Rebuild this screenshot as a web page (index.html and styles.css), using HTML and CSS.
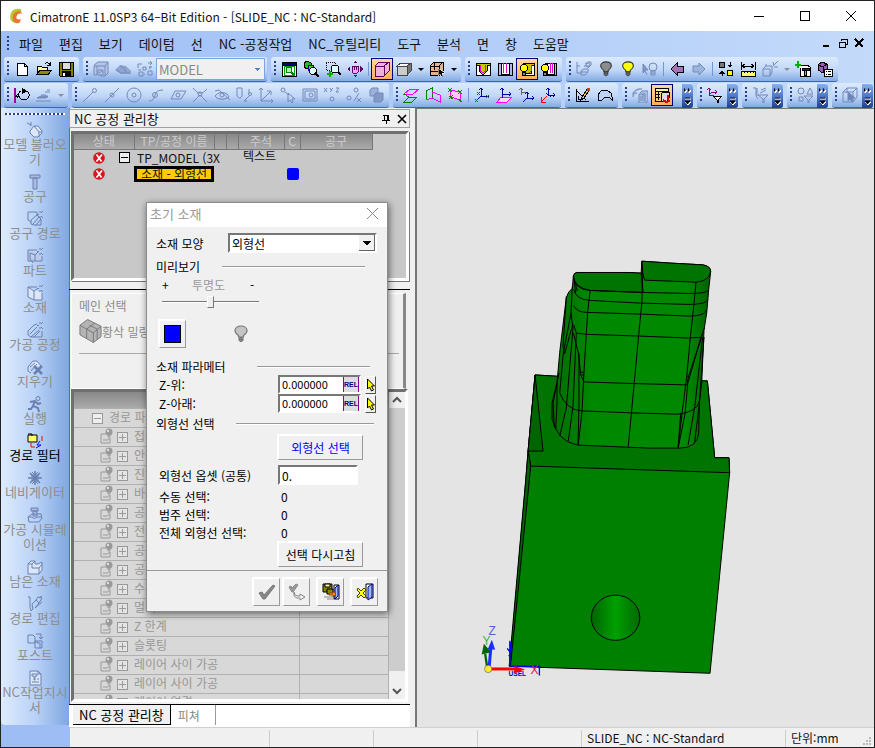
FILE: index.html
```html
<!DOCTYPE html>
<html lang="ko">
<head>
<meta charset="utf-8">
<title>CimatronE 11.0SP3 64–Bit Edition</title>
<link rel="stylesheet" href="styles.css">
</head>
<body>
<!-- shared icons -->
<svg class="defs" aria-hidden="true">
  <symbol id="pin" viewBox="0 0 14 16"><path d="M1 6h5M1 6v9h9V10M3 12h5" stroke="#999" fill="none"/><circle cx="9" cy="4" r="3.500" fill="#999"/><circle cx="8" cy="3" r="1.200" fill="#ddd"/><path d="M9 7v5M7 8h4" stroke="#999"/></symbol>
  <symbol id="plus" viewBox="0 0 11 11"><path d="M.5.5h10v10H.5zM2 5.500h7M5.500 2v7" fill="#e4e4e4" stroke="#999"/></symbol>
  <symbol id="minus" viewBox="0 0 11 11"><path d="M.5.5h10v10H.5zM2 5.500h7" fill="#eee" stroke="currentColor"/></symbol>
  <symbol id="err" viewBox="0 0 12 12"><circle cx="6" cy="6" r="5.800" fill="#d8141c"/><path d="M3.500 2.500l5 7M9 2.500l-5.500 7" stroke="#fff" stroke-width="1.700"/></symbol>
  <symbol id="more" viewBox="0 0 11 24"><path d="M2 4l2 2-2 2zM6 4l2 2-2 2z" fill="#fff" stroke="#fff" transform="translate(1 1)"/><path d="M2 4l2 2-2 2zM6 4l2 2-2 2z" fill="#000" stroke="none"/><path d="M3 15h6M3 18h6l-3 3z" fill="#fff" stroke="#fff"/><path d="M3 14h5M3 17h5l-2.500 3z" fill="#000" stroke="#000" stroke-width=".8"/></symbol>
  <symbol id="bulb" viewBox="0 0 14 18"><path d="M4.500 12v-1.500Q1 8 1 5.500C1 2.500 4 1 7 1s6 1.500 6 4.500Q13 8 9.500 10.500V12z" stroke-width="1.200"/><path d="M5 12.500h4v3l-1 1H6l-1-1zM5 14.500h4" fill="#888" stroke-width="1"/></symbol>
  <symbol id="burst" viewBox="0 0 6 7"><path d="M0 3.500h2M3 0v2M3 5v2M4 2l2-2M4 5l2 2" fill="none"/></symbol>
</svg>

<div class="app">
  <!-- title bar -->
  <header class="titlebar">
    <svg class="logo" viewBox="0 0 16 18"><path d="M13 1Q3-1 1.500 7T7 16Q4 12 5 8T13 4z" fill="#b5c934"/><path d="M12 3Q4 3 4 10q0 7 7 6l2-4Q7 13 8 9t6-3z" fill="#e8762e"/></svg>
    <h1>CimatronE 11.0SP3 64–Bit Edition - [SLIDE_NC : NC-Standard]</h1>
    <div class="winbtns">
      <button aria-label="최소화"><svg viewBox="0 0 10 10"><path d="M0 5.500h10"/></svg></button>
      <button aria-label="최대화"><svg viewBox="0 0 10 10"><path d="M.5.500h9v9h-9z"/></svg></button>
      <button aria-label="닫기"><svg viewBox="0 0 10 10"><path d="M0 0l10 10M10 0L0 10" shape-rendering="auto"/></svg></button>
    </div>
  </header>

  <!-- menu -->
  <nav class="menubar">
    <i class="grip"></i>
    <a href="#">파일</a><a href="#">편집</a><a href="#">보기</a><a href="#">데이텀</a><a href="#">선</a><a href="#">NC -공정작업</a><a href="#">NC_유틸리티</a><a href="#">도구</a><a href="#">분석</a><a href="#">면</a><a href="#">창</a><a href="#">도움말</a>
    <div class="mdi">
      <button aria-label="창 최소화"><svg viewBox="0 0 10 10"><path d="M1 8h6" stroke-width="2"/></svg></button>
      <button aria-label="창 복원"><svg viewBox="0 0 10 10"><path d="M3 3V1h6v5H7M3 1.500h6M1 4h6v5H1zM1 4.500h6"/></svg></button>
      <button aria-label="창 닫기"><svg viewBox="0 0 10 10"><path d="M1 1l8 8M9 1L1 9" stroke-width="2"/></svg></button>
    </div>
  </nav>

  <!-- toolbars -->
  <div class="toolbars">
    <div class="row">
      <div class="group"><i class="grip"></i>
        <button aria-label="새 문서"><svg viewBox="0 0 16 16"><path d="M3 2h7l3 3v9H3zM10 2v3h3" fill="#fff"/></svg></button>
        <button aria-label="열기"><svg viewBox="0 0 16 16"><path d="M1 13V5h4l1 1h5v3" fill="#ffff9c"/><path d="M1 13.500L4 9h12l-4 4.500z" fill="#8c8c00"/><path d="M9 3q3-3 5 1M14 1v3h-3"/></svg></button>
        <button aria-label="저장"><svg viewBox="0 0 16 16"><path d="M1 1h14v14H2l-1-1z" fill="#808000"/><path d="M4 1h8v7H4z" fill="#dcdcdc"/><path d="M4 10h8v5H4z" fill="#000"/><path d="M5 12h2v3H5z" fill="#fff" stroke="none"/></svg></button>
      </div>
      <div class="group"><i class="grip"></i>
        <button disabled aria-label="모델"><svg viewBox="0 0 16 16"><path d="M1 4l4-3h10v11l-3 3M1 5h3v9H1zM4 5h8M12 5v10H7M12 5l3-4M5 9h5v5H5zM6 12l3-2" fill="#b3c6e8"/></svg></button>
        <button disabled aria-label="솔리드"><svg viewBox="0 0 16 16"><path d="M0 9l5-5 6 1 5 5v3H6z" fill="#8ea5d0" stroke="none"/><path d="M1 9l5 3h9M5 5q5 1 6 6"/></svg></button>
        <button disabled aria-label="교체"><svg viewBox="0 0 16 16"><path d="M1 3h4M1 3v4M6 6h3v3H6zM2 11h4v4H2zM11 10h4v4h-4zM11 2h4M13 0l2 2-2 2M1 9h3M8 13H7M12 6h3M13 5v3"/></svg></button>
        <select disabled aria-label="좌표계"><option>MODEL</option></select>
      </div>
      <div class="group"><i class="grip"></i>
        <button aria-label="전체 보기"><svg viewBox="0 0 16 16"><path d="M1 1h14v14H1z" fill="#fff"/><path d="M1 1h14v3H1z" fill="#000080"/><path d="M3 5h10v9H3z" stroke="#00a000" fill="none"/><circle cx="8" cy="9" r="3" stroke="#008000" fill="#b4f0b4"/><path d="M10 11l3 3" stroke="#008000" stroke-width="2"/></svg></button>
        <button aria-label="선택 확대"><svg viewBox="0 0 16 16"><path d="M1 2l3-2 4 2v4L4 8 1 6z" fill="#20c020"/><path d="M5 4h5v5H5z" fill="#30e030" stroke="#0000a0"/><circle cx="10" cy="10" r="3.500" fill="#dff"/><path d="M12 12l4 4" stroke-width="2"/></svg></button>
        <button aria-label="창 확대"><svg viewBox="0 0 16 16"><path d="M1 1h9v8H1z" stroke-dasharray="1 1"/><circle cx="10" cy="8" r="4" fill="#dff"/><path d="M13 11l3 3" stroke-width="2"/><path d="M5 10v6M2 13h6" stroke="#00b000" stroke-width="2"/></svg></button>
        <button aria-label="화면 이동"><svg viewBox="0 0 16 16"><path d="M5 5h6v6q-3 4-6 0z" fill="#ff9cff" stroke="#600060"/><path d="M0 8l3-3v6zM16 8l-3-3v6zM8 0l2 2H6zM8 16l2-2H6z" fill="#600060"  stroke="none"/><path d="M7 5v4M9 5v4" stroke="#600060"/></svg></button>
        <i class="sep"></i>
        <button class="on" aria-label="와이어"><svg viewBox="0 0 16 16"><path d="M1 5l4-4h10v9l-5 5H1zM1 5h9v10M10 5l5-4" fill="#efb0df" stroke="#600060"/></svg></button>
        <button aria-label="음영"><svg viewBox="0 0 16 16" class="soft"><path d="M1 5l4-3h10v8l-4 4H1z" fill="#777"/><path d="M1 5h10v9H1z" fill="#ccc"/><path d="M1 5l4-3h10l-4 3z" fill="#fff"/></svg></button><button class="drop" aria-label="음영 옵션"></button>
        <button aria-label="회전"><svg viewBox="0 0 16 16"><path d="M1 5l4-4h9v9M1 5h9v9H1zM1 10h9M5 1v8M10 5l4-4" fill="#e4b48c"/><path d="M9 7v8l2-2 2 3 1-1-1-3h3z" fill="#000" stroke="#fff" stroke-width=".5"/></svg></button><button class="drop" aria-label="회전 옵션"></button>
      </div>
      <div class="group"><i class="grip"></i>
        <button aria-label="커터 1"><svg viewBox="0 0 16 16"><path d="M1 2h14v12H1z" fill="#fff"/><path d="M1 2h14v2h-3v6l-3 3H7l-3-3V4H1z" fill="#c8c400"/><path d="M5.500 4v6l2.500 2 2.500-2V4" stroke="#f000d0"/></svg></button>
        <button aria-label="커터 2"><svg viewBox="0 0 16 16"><path d="M1 2h14v12H1z" fill="#b4b4ee"/><path d="M4 2h8v11H4z" fill="#fff"/><path d="M6.500 2v10M9.500 2v10" stroke="#f000d0"/></svg></button>
        <button class="on" aria-label="커터 3"><svg viewBox="0 0 16 16"><path d="M4 2h11v12H4z" fill="#fff"/><path d="M4 2h11v2h-3v8H6z" fill="#c8c400"/><path d="M12 4v6l-2 2" stroke="#f000d0"/><circle cx="5" cy="7" r="3.500" fill="#ff0"/><path d="M3.500 11.500h3v3h-3z" fill="#888"/></svg></button>
        <button aria-label="커터 4"><svg viewBox="0 0 16 16"><path d="M4 2h11v12H4z" fill="#b4b4ee"/><path d="M6 2h7v11H6z" fill="#fff"/><path d="M9.500 2v10M11.500 2v10" stroke="#f000d0"/><circle cx="4" cy="7" r="3.500" fill="#ff0"/><path d="M2.500 11.500h3v3h-3z" fill="#888"/></svg></button>
      </div>
      <div class="group"><i class="grip"></i>
        <button disabled aria-label="트리"><svg viewBox="0 0 16 16"><path d="M1 1v11h4M1 5h3M8 5h5M5 11h6M9 3l3-2h3v3l-3 3M5 10l3-2h4v3l-3 3H5z" fill="none"/><circle cx="12" cy="4" r="2"/></svg></button>
        <button aria-label="숨기기"><svg viewBox="0 0 14 18" class="dark"><use href="#bulb"/></svg></button>
        <button aria-label="보이기"><svg viewBox="0 0 14 18" class="lit"><use href="#bulb"/></svg></button>
        <button disabled aria-label="선택 보이기"><svg viewBox="0 0 16 16"><path d="M1 3v9l2-2 2 4M1 3l5 6H3" fill="#7d93c0"/><circle cx="11" cy="6" r="4"/><path d="M9 10h4v4H9zM9 12h4"/></svg></button>
        <i class="sep"></i>
        <button aria-label="이전"><svg viewBox="0 0 16 16"><path d="M2 8l6-6v3h6v6H8v3z" fill="#a674b4"/></svg></button>
        <button disabled aria-label="다음"><svg viewBox="0 0 16 16"><path d="M14 8L8 2v3H2v6h6v3z" fill="#9fb6dc"/></svg></button>
        <i class="sep"></i>
        <button aria-label="전환"><svg viewBox="0 0 16 16"><circle cx="4" cy="4" r="3" fill="#777"/><circle cx="12" cy="12" r="3" fill="#ff0"/><path d="M12 1v3M10 4h4l-2 2zM4 15v-3M2 12h4l-2-2z" fill="#000"/></svg></button>
        <button aria-label="측정"><svg viewBox="0 0 16 16"><path d="M1 1v8M15 1v8M2 5h12M5 3L2 5l3 2M11 3l3 2-3 2"/><path d="M1 10h14v5H1z" fill="#ff6"/><path d="M4 10v2M7 10v2M10 10v2M13 10v2"/></svg></button>
        <button disabled aria-label="단면"><svg viewBox="0 0 16 16"><path d="M1 8l3-3h6v6l-2 4H1zM1 8h7v7M4 5V3M11 5l5-5M11 1l1 3M12 6h4"/></svg></button><button class="drop" disabled aria-label="단면 옵션"></button>
        <button aria-label="공구 추가"><svg viewBox="0 0 16 16"><path d="M6 4h6l3 2v9H5V7" fill="#fff"/><path d="M7 7h7v2H7z" fill="#333"/><path d="M9.500 9h2v5h-2z" fill="#e90"/><path d="M3 0v7M0 3.500h6" stroke="#00b000" stroke-width="2"/></svg></button>
        <button aria-label="속성"><svg viewBox="0 0 16 16"><path d="M1 4l4-3 5 2v6l-4 3-5-3z" fill="#a05ab4"/><path d="M1 4l5 2v5M6 6l4-3"/><path d="M7 8h8v7H7z" fill="#fff"/><path d="M9 10h1M11 10h3M9 13h1M11 13h3"/></svg></button>
      </div>
    </div>

    <div class="row">
      <div class="group"><i class="grip"></i>
        <button aria-label="스케치"><svg viewBox="0 0 16 16"><path d="M1 1v15" stroke="#a000a0" stroke-width="2"/><path d="M7 4Q3 6 5 10q3 4 8 2 4-3 1-7l-3-1M1 9h5M4 7L2 9l2 2"/><path d="M8 1v6l4-3z" fill="#000"/></svg></button>
        <button disabled aria-label="플랜"><svg viewBox="0 0 16 16"><path d="M0 14h15M5 8h5M4 10h8M9 5h5M11 3h3"/><path d="M1 11h9l2-2H5z" fill="#7d93c0"/></svg></button><button class="drop" disabled aria-label="플랜 옵션"></button>
      </div>
      <div class="group"><i class="grip"></i>
        <button disabled aria-label="끝점"><svg viewBox="0 0 16 16"><path d="M1 15L11 5"/><circle cx="12.500" cy="3.500" r="2"/></svg></button>
        <button disabled aria-label="중간점"><svg viewBox="0 0 16 16"><path d="M1 15L15 1"/><circle cx="8" cy="8" r="2"/></svg></button>
        <button disabled aria-label="중심"><svg viewBox="0 0 16 16"><circle cx="8" cy="8" r="7"/><circle cx="8" cy="8" r="2"/></svg></button>
        <button disabled aria-label="곡선점"><svg viewBox="0 0 16 16"><path d="M1 14q5 0 6-6 1-5 8-5"/><circle cx="7" cy="8" r="2.500"/></svg></button>
        <button disabled aria-label="면점"><svg viewBox="0 0 16 16"><path d="M1 12l4-8h11l-5 8z"/><circle cx="8" cy="8" r="2"/></svg></button>
        <button disabled aria-label="교차점"><svg viewBox="0 0 16 16"><path d="M1 1q7 10 14 1M1 15L8 8l7 7"/><circle cx="8" cy="7" r="2"/></svg></button>
        <button disabled aria-label="관통점"><svg viewBox="0 0 16 16"><path d="M1 4l4-1 11 10M1 9q5-6 12-2l2 3q-6 4-12 1z"/><circle cx="8" cy="8" r="2"/></svg></button>
        <button disabled aria-label="투영점"><svg viewBox="0 0 16 16"><path d="M1 1h5v8q-2 4-5 0zM8 14l6-6M8 14h3M13 2v4"/><circle cx="14" cy="7" r="1.500"/></svg></button>
        <button disabled aria-label="축점"><svg viewBox="0 0 16 16"><path d="M3 1v13h12M3 14l9-9M1 3l2-2 2 2M13 12l2 2-2 2M9 4h4v4"/></svg></button>
        <button disabled aria-label="선택점"><svg viewBox="0 0 16 16"><circle cx="3" cy="3" r="2"/><path d="M5 5l4 3M8 6v9l2-2 2 3 1-1-1-3h3z"/></svg></button>
        <button disabled aria-label="화면점"><svg viewBox="0 0 16 16"><path d="M1 2h14v12H1zM3 4h10v8H3z"/><circle cx="9" cy="8" r="2"/></svg></button>
        <button disabled aria-label="좌표점"><svg viewBox="0 0 16 16"><path d="M0 1l3 4M3 1L0 5M6 1l1 2 2-2M8 3L6 5M12 1h3l-3 4h3"/><circle cx="8" cy="12" r="2"/></svg></button>
        <button disabled aria-label="비율점"><svg viewBox="0 0 16 16"><path d="M8 14l5-8M11 11l4 4M15 11l-4 4"/><circle cx="10" cy="3" r="2"/><circle cx="3" cy="11" r="2"/></svg></button>
        <button disabled aria-label="솔리드 점"><svg viewBox="0 0 16 16"><path d="M2 3l2-2h6v6l-2 2H2z" fill="#9db1da"/><path d="M6 8l2-2h7v7l-2 2H6z" fill="#8298c6"/></svg></button>
      </div>
      <div class="group"><i class="grip"></i>
        <button aria-label="평면"><svg viewBox="0 0 16 16"><path d="M1 7l6-5h9l-6 5z" stroke="#f0f"/><path d="M1 15l5-5h8l-5 5zM1 7l5 3" stroke="#008000"/></svg></button>
        <button aria-label="평면 2"><svg viewBox="0 0 16 16"><path d="M1 13V4l6-3v10z" stroke="#008000"/><path d="M7 5l8 3v7L7 11 1 13" stroke="#f0f"/></svg></button>
        <button aria-label="평면 3"><svg viewBox="0 0 16 16"><path d="M3 3l10 2v8L4 10z" stroke="#f0f" fill="#fce"/><path d="M1 1l4 4M5 1L1 5M11 3l4 4M15 3l-4 4M11 12l4 3M2 9l4 3M6 8l-4 4" stroke="#008000"/></svg></button>
        <i class="sep"></i>
        <button aria-label="좌표 1"><svg viewBox="0 0 16 16"><path d="M7 9V1M5 3l2-2 2 2M7 9h8M7 9l-5 5" stroke="#0000a0"/><path d="M3 5l3 3M6 5L3 8M12 8l3 3M15 8l-3 3M1 12l3 3M4 12l-3 3" stroke="#008000"/></svg></button>
        <button aria-label="좌표 2"><svg viewBox="0 0 16 16"><path d="M1 15l4-5h11l-5 5z" stroke="#f0f" fill="#fbd6ff"/><path d="M6 11V1M4 3l2-2 2 2M6 7h9M13 5l2 2-2 2" stroke="#0000a0"/></svg></button>
        <button aria-label="좌표 3"><svg viewBox="0 0 16 16"><path d="M3 8V1M1 3l2-2 2 2M3 5h5" stroke="#666"/><path d="M9 12V5M7 7l2-2 2 2M9 11h7M14 9l2 2-2 2M9 11l-4 4" stroke="#0000a0"/></svg></button>
        <button aria-label="좌표 4"><svg viewBox="0 0 16 16"><path d="M8 8V1M6 3l2-2 2 2M8 8h7M13 6l2 2-2 2M6 6l5 4" stroke="#0000a0"/><path d="M7 9l-5 5M1 10v5h5" stroke="red"/></svg></button>
      </div>
      <div class="group"><i class="grip"></i>
        <button aria-label="스케쳐"><svg viewBox="0 0 16 16"><path d="M1 2v12h13M1 3l10 10M3 9v3h3"/><path d="M7 10l6-9 2 1-6 9-3 2z" fill="#f7c74a"/><path d="M13 1l2 1-1 2-2-1z" fill="#c40" stroke="#c40"/></svg></button>
        <button aria-label="복합선"><svg viewBox="0 0 16 16"><path d="M1 14V8l3-4q6-2 10 2l2 8-3-3q-3-2-6 0l-2 2z" fill="#bcd3f8"/></svg></button>
      </div>
      <div class="group"><i class="grip"></i>
        <button disabled aria-label="공정"><svg viewBox="0 0 16 16"><path d="M1 6q3-5 9-4M1 10V6h4M8 6l2-2h6v10l-2 2H7V7h6v8M9 9v5M11 7v7" fill="#a9bfe6"/></svg></button>
        <button class="on" aria-label="공정 관리창"><svg viewBox="0 0 16 16"><path d="M1 1h13v13H1z" fill="#ffd27a"/><path d="M1 1h13v3H1zM1 7h5M1 10h5M4 4v9" fill="#ffef9a"/><path d="M7 7l2-2h6v6l-2 3H7z" fill="#ddd"/><path d="M9 13l3 2 4-1M14 8v5" stroke="#d00" stroke-width="2"/></svg></button>
        <i class="gap"></i><button class="more" aria-label="더 보기"><svg viewBox="0 0 11 24"><use href="#more"/></svg></button>
      </div>
      <div class="group"><i class="grip"></i>
        <button aria-label="필터 1"><svg viewBox="0 0 16 16"><path d="M0 3l2-2 2 2M2 1v7h5M5 5h5M8 3l2 2-2 2M2 8l3-3" stroke="#900078"/><path d="M6 9h9l-4 4v3h-1v-3z" fill="#fff"/></svg></button>
        <button class="more" aria-label="더 보기"><svg viewBox="0 0 11 24"><use href="#more"/></svg></button>
      </div>
      <div class="group"><i class="grip"></i>
        <button disabled aria-label="필터 2"><svg viewBox="0 0 16 16"><path d="M1 1h3v8l2 3M5 1v8M8 6l6-3M9 3l5-2M6 8h10l-4 4v4h-1v-4z"/></svg></button>
        <button class="more" aria-label="더 보기"><svg viewBox="0 0 11 24"><use href="#more"/></svg></button>
      </div>
      <div class="group"><i class="grip"></i>
        <button disabled aria-label="필터 3"><svg viewBox="0 0 16 16"><circle cx="4" cy="4" r="3"/><path d="M10 7l3-6 3 6zM2 10h4v4H2zM7 9h9l-4 4v3h-1v-3z"/></svg></button>
        <button class="more" aria-label="더 보기"><svg viewBox="0 0 11 24"><use href="#more"/></svg></button>
      </div>
      <div class="group"><i class="grip"></i>
        <button disabled aria-label="선택"><svg viewBox="0 0 16 16"><path d="M1 5l4-4h10v9l-4 5H1zM1 5h10v9M11 5l4-4M5 1v5"/><path d="M6 5v9l2-2 2 3 1-1-1-3h3z" fill="#6c84b5"/></svg></button>
        <button class="more" aria-label="더 보기"><svg viewBox="0 0 11 24"><use href="#more"/></svg></button>
      </div>
    </div>
  </div>

  <div class="body">
    <!-- NC guide bar -->
    <aside class="guide">
      <div class="guide-in">
        <i class="dots"></i>
        <button disabled><svg viewBox="0 0 16 16"><path d="M3 9l4-5h4l4 5v2l-4 4H7l-4-4zM7 4l5 6v5M0 1l4 2M4 0v4M12 10h3" fill="#dbe6f8"/></svg>모델 불러오기</button>
        <button disabled><svg viewBox="0 0 16 16"><path d="M3 1h10v3H3zM6 4h4v11H6z" fill="#a9bbdf"/></svg>공구</button>
        <button disabled><svg viewBox="0 0 16 16"><path d="M1 1h9v3M1 1v8l3 2M4 13v-4l6-5 4 4v6H7zM6 13l6-7M9 14l5-6"/><use href="#burst" x="10" width="6" height="7"/></svg>공구 경로</button>
        <button disabled><svg viewBox="0 0 16 16"><path d="M1 2h9M1 2v11h14V8M3 5l5 2v6M8 7l3-3M3 5v6l3 4" fill="#bccbe8"/><use href="#burst" x="10" width="6" height="7"/></svg>파트</button>
        <button disabled><svg viewBox="0 0 16 16"><path d="M1 2h9M1 2l6 4M1 2v10l6 3h8V8M7 6v9M7 6l3-2" fill="#dbe6f8"/><use href="#burst" x="10" width="6" height="7"/></svg>소재</button>
        <button disabled><svg viewBox="0 0 16 16"><path d="M1 9l6-6 3-1M1 9v4l3 2 8-7M4 15h11V9M3 12l7-7M7 15l6-6"/><use href="#burst" x="10" width="6" height="7"/></svg>가공 공정</button>
        <button disabled><svg viewBox="0 0 16 16"><path d="M1 8l5-6h4l4 5M1 8v4l3 2M4 12l6-7M3 8l5-4" fill="#dbe6f8"/><path d="M7 7l8 8M15 7l-8 8" stroke-width="2.500"/></svg>지우기</button>
        <button disabled><svg viewBox="0 0 16 16"><circle cx="11" cy="2.500" r="2"/><path d="M3 6l5-1 3 3 3-1M8 5L6 10l5 2 1 4M6 10l-2 3H1" stroke-width="2"/></svg>실행</button>
        <button class="live"><svg viewBox="0 0 16 16"><path d="M1 2h9v7H1z" fill="#ff6" stroke="#000"/><path d="M1 1h4v2" stroke="#000"/><path d="M15 3v5M4 10v4h4" stroke="red"/><path d="M13 8l-3 4h4l-5 3" stroke="#00f"/></svg>경로 필터</button>
        <button disabled><svg viewBox="0 0 16 16"><path d="M8 1v14M1 8h14M3 3l10 10M13 3L3 13" stroke-width="1.500"/><path d="M5 5h6v6H5zM5 2l3 3 3-3M5 14l3-3 3 3"/></svg>네비게이터</button>
        <button disabled><svg viewBox="0 0 16 16"><path d="M4 1h7v3H4zM6 4h4v5H6z" fill="#a9bbdf"/><path d="M1 10l4-3h9l1 4-3 4H2zM1 10h4q2 3 5 0h4"/></svg>가공 시뮬레이션</button>
        <button disabled><svg viewBox="0 0 16 16"><path d="M1 5l3-3h4v3h3l4-2v8l-3 4H1zM1 5h4v4h7v6M12 9l3-4M5 5l3-3" fill="#dbe6f8"/></svg>남은 소재</button>
        <button disabled><svg viewBox="0 0 16 16"><path d="M1 1h2v10l1 4 2-2-1-5 4-4 3 3-4 5 7-6M9 4l2-3 4 1-3 5M13 1l2-1"/></svg>경로 편집</button>
        <button disabled><svg viewBox="0 0 16 16"><path d="M1 2h5l2 2v6H1zM9 1h5v5M12 4l2 2 2-2M8 8h7v7H8zM10 10h3v5M10 8v2"/></svg>포스트</button>
        <button disabled><svg viewBox="0 0 16 16"><path d="M3 1h8l3 3v11H3zM11 1v3h3M5 4h5v2H8v4H7V6H5zM5 12h7M10 9h2" fill="#dbe6f8"/></svg>NC작업지시서</button>
      </div>
    </aside>

    <div class="work">
      <div class="split">
        <section class="panel">
          <div class="caption">
            <h2>NC 공정 관리창</h2>
            <button aria-label="고정"><svg viewBox="0 0 10 10"><path d="M2 1h6M3 1v5M7 1v5M6 1v5M1 6h8M5 6v4"/></svg></button>
            <button aria-label="패널 닫기"><svg viewBox="0 0 10 10"><path d="M1 1l8 8M9 1L1 9" stroke-width="1.600" shape-rendering="auto"/></svg></button>
          </div>

          <div class="bevel procs">
            <table>
              <thead><tr><th class="w-state">상태</th><th class="w-name">TP/공정 이름</th><th class="w-flag"></th><th class="w-flag"></th><th class="w-note">주석</th><th class="w-c">C</th><th class="w-tool">공구</th></tr></thead>
              <tbody>
                <tr><td class="st"><svg><use href="#err"/></svg></td><td class="tp"><svg><use href="#minus"/></svg>TP_MODEL (3X</td><td></td><td></td><td class="note">텍스트</td><td></td><td></td></tr>
                <tr><td class="st"><svg><use href="#err"/></svg></td><td class="sel"><span>소재 - 외형선</span></td><td></td><td></td><td></td><td><i class="blue"></i></td><td></td></tr>
              </tbody>
            </table>
          </div>

          <div class="params">
            <div class="main">
              <p>메인 선택</p>
              <div class="pick"><svg viewBox="0 0 24 26"><path d="M1 7l8-6 14 7v11l-8 6-14-8z" fill="#b4b4b4" stroke="#777"/><path d="M1 7l14 8v10M15 15l8-7M8 11l8-6M8 11v10M11 7l8 4v11" fill="none" stroke="#777"/></svg>황삭 밀링</div>
            </div>
            <div class="list">
              <table>
                <thead><tr><th class="w-param"></th><th></th></tr></thead>
                <tbody>
                  <tr class="top"><td><svg class="box"><use href="#minus"/></svg>경로 파</td><td></td></tr>
                  <tr><td><svg class="pin"><use href="#pin"/></svg><svg class="box"><use href="#plus"/></svg>접근</td><td></td></tr>
                  <tr><td><svg class="pin"><use href="#pin"/></svg><svg class="box"><use href="#plus"/></svg>안전</td><td></td></tr>
                  <tr><td><svg class="pin"><use href="#pin"/></svg><svg class="box"><use href="#plus"/></svg>진입</td><td></td></tr>
                  <tr><td><svg class="pin"><use href="#pin"/></svg><svg class="box"><use href="#plus"/></svg>바운</td><td></td></tr>
                  <tr><td><svg class="pin"><use href="#pin"/></svg><svg class="box"><use href="#plus"/></svg>공차</td><td></td></tr>
                  <tr><td><svg class="pin"><use href="#pin"/></svg><svg class="box"><use href="#plus"/></svg>전극</td><td></td></tr>
                  <tr><td><svg class="pin"><use href="#pin"/></svg><svg class="box"><use href="#plus"/></svg>공구</td><td></td></tr>
                  <tr><td><svg class="pin"><use href="#pin"/></svg><svg class="box"><use href="#plus"/></svg>공구</td><td></td></tr>
                  <tr><td><svg class="pin"><use href="#pin"/></svg><svg class="box"><use href="#plus"/></svg>수직</td><td></td></tr>
                  <tr><td><svg class="pin"><use href="#pin"/></svg><svg class="box"><use href="#plus"/></svg>멀티</td><td></td></tr>
                  <tr><td><svg class="pin"><use href="#pin"/></svg><svg class="box"><use href="#plus"/></svg>Z 한계</td><td></td></tr>
                  <tr><td><svg class="pin"><use href="#pin"/></svg><svg class="box"><use href="#plus"/></svg>슬롯팅</td><td></td></tr>
                  <tr><td><svg class="pin"><use href="#pin"/></svg><svg class="box"><use href="#plus"/></svg>레이어 사이 가공</td><td></td></tr>
                  <tr><td><svg class="pin"><use href="#pin"/></svg><svg class="box"><use href="#plus"/></svg>레이어 사이 가공</td><td></td></tr>
                  <tr><td><svg class="pin"><use href="#pin"/></svg><svg class="box"><use href="#plus"/></svg>레이어 연결</td><td></td></tr>
                </tbody>
              </table>
              <div class="scroll">
                <svg viewBox="0 0 16 16"><path d="M4 10l4-4 4 4"/></svg>
                <i></i>
                <svg viewBox="0 0 16 16"><path d="M4 6l4 4 4-4"/></svg>
              </div>
            </div>
          </div>

          <div class="tabs"><button class="cur">NC 공정 관리창</button><button>피쳐</button></div>
        </section>

        <!-- initial stock dialog -->
        <form class="dialog">
          <header><h3>초기 소재</h3><button type="button" aria-label="닫기"><svg viewBox="0 0 11 11"><path d="M0 0l11 11M11 0L0 11"/></svg></button></header>
          <div class="line shape"><label for="shape">소재 모양</label><select id="shape"><option>외형선</option></select></div>
          <div class="line sect"><b>미리보기</b><hr class="h1"></div>
          <div class="line opac"><span>+</span><label for="opac">투명도</label><span>-</span></div>
          <div class="line slide"><input type="range" id="opac" value="50"></div>
          <div class="line color"><button type="button" class="swatch" aria-label="색상"><i></i></button><svg viewBox="0 0 14 18"><use href="#bulb"/></svg></div>
          <div class="line sect"><b>소재 파라메터</b><hr class="h2"></div>
          <div class="line z"><label for="zt">Z-위:</label><span class="num"><input id="zt" value="0.000000"><button type="button">REL</button></span><button type="button" class="pickbtn" aria-label="선택"><svg viewBox="0 0 10 16"><path d="M1.500 2v10l2-2 2 4 2-1-2-4h3z" fill="#ff0" stroke="#000"/></svg></button></div>
          <div class="line z"><label for="zb">Z-아래:</label><span class="num"><input id="zb" value="0.000000"><button type="button">REL</button></span><button type="button" class="pickbtn" aria-label="선택"><svg viewBox="0 0 10 16"><path d="M1.500 2v10l2-2 2 4 2-1-2-4h3z" fill="#ff0" stroke="#000"/></svg></button></div>
          <div class="line sect"><b>외형선 선택</b><hr class="h3"></div>
          <div class="line wide"><button type="button" class="btn pickc">외형선 선택</button></div>
          <div class="line off"><label for="off">외형선 옵셋 (공통)</label><input id="off" value="0."></div>
          <div class="line cnt"><span>수동 선택:</span><output>0</output></div>
          <div class="line cnt"><span>범주 선택:</span><output>0</output></div>
          <div class="line cnt"><span>전체 외형선 선택:</span><output>0</output></div>
          <div class="line wide"><button type="button" class="btn">선택 다시고침</button></div>
          <footer>
            <button type="button" disabled aria-label="확인"><svg viewBox="0 0 18 18"><path d="M1 10l3-1 2 3L15 2l2 1L7 16H5z" fill="#888" stroke="#777"/></svg></button>
            <button type="button" disabled aria-label="적용"><svg viewBox="0 0 18 18"><path d="M1 4l2-1 1 2 4-4 2 1-5 7H4z" fill="#999" stroke="#888"/><path d="M6 9q0 4 4 4h2v-2l5 3-5 3v-2H9q-4-1-3-6z" fill="#f0f0f0" stroke="#888"/></svg></button>
            <button type="button" class="gap" aria-label="저장 후 종료"><svg viewBox="0 0 18 18"><path d="M1 1h9v8H1z" fill="#880" stroke="#000"/><path d="M3 1h5v3H3z" fill="#ff8" stroke="#000"/><path d="M5 6h6v5H5z" fill="#880" stroke="#000"/><path d="M12 2h5v14h-5z" fill="#fff" stroke="#000"/><path d="M13 5l3-3v11l-3 3z" fill="#9bf" stroke="#00a"/><path d="M7 10h4V8l3 3-3 3v-2H7z" fill="#f80" stroke="#840"/><path d="M2 14h9M5 16h7" stroke="#888"/></svg></button>
            <button type="button" class="gap" aria-label="취소"><svg viewBox="0 0 18 18"><path d="M10 1h7v14h-7z" fill="#fff" stroke="#000"/><path d="M12 4l4-3v13l-4 3z" fill="#9bf" stroke="#00a"/><path d="M2 5l3 3 3-3 2 2-3 3 3 3-2 2-3-3-3 3-1-2 3-3-3-3z" fill="#ff0" stroke="#440"/></svg></button>
          </footer>
        </form>

        <!-- model view -->
        <main class="view">
          <svg viewBox="-159 -420 1374 1851" preserveAspectRatio="xMidYMid meet">
            <defs><linearGradient id="hole"><stop offset="0" stop-color="#006400"/><stop offset=".5" stop-color="#00a000"/><stop offset="1" stop-color="#006800"/></linearGradient>
            <linearGradient id="side" x2="1"><stop offset="0" stop-color="#006c00"/><stop offset=".25" stop-color="#008800"/><stop offset=".85" stop-color="#008800"/><stop offset="1" stop-color="#006000"/></linearGradient></defs>
            <g stroke="#000" stroke-width="3" stroke-linejoin="round">
              <path d="M196 376l66 4 435 14h17l22 231h43l2 45-59 603-602-21 48-557 7-90z" fill="#008000"/>
              <path d="M196 376l66 4 435 14h17l22 231h43l2 45-598-20-8-45z" fill="#007400"/>
              <path d="M196 376l24 229h-45z" fill="#006400"/>
              <path d="M175 605l8 45-61 602h-4l50-562z" fill="#006000"/>
              <path d="M311 80q2-12 12-12h153l39 2 2-36 90 6 93 5q24 4 24 20l-6 55-6 70-8 50-4 90-3 70-7 60-2 90q-4 45-55 46h-95l-118-5-95-4q-60-10-78-77v-50l15-60 8-92 20-165q6-20 18-27z" fill="url(#side)"/>
              <path d="M311 80q2-12 12-12h153l39 2 5 58-158-6q-46-8-51-42z" fill="#007400"/>
              <path d="M517 34l90 6 93 5q24 4 24 20-6 30-44 32l-155-6-5-20z" fill="#007400"/>
              <g fill="none">
                <path d="M517 34l3 94M362 122l-8 65-11 180-6 120-11 98M519 92l-2 66-10 104-13 140-18 190M680 97l-6 64-12 110-10 110-14 110-12 104"/>
                <path d="M312 88q8 32 50 34l158 6 138 3q56 0 60-10"/>
                <path d="M312 120q8 30 50 32l150 8 146 4q52 0 58-14"/>
                <path d="M312 168q10 20 40 20l156 5 150 6q48 0 54-18"/>
                <path d="M312 225l8 25 30 4 155 5 150 6 40-2 10-28"/>
                <path d="M311 250q20 60 22 125l10 22 150 5 160 4 4-25q20-60 42-125"/>
                <path d="M270 430q20 50 64 54l150 6 140 4q60-6 66-40"/>
                <path d="M308 110l-4 80-23 120-11 120M304 190l6 45-20 240-20 85M285 312l25-90M320 250l-10 220-14 105M328 310v160l-3 115M290 140l-10 150 5 22M268 370l-18 90 4 75M262 400v60l-4 80M334 368h10M333 376h10M650 380h8M695 262l-40 140-8 90-20 100M700 262l-24 210-20 115M704 262l-14 200-14 115M634 490l-8 104M312 80l6 50M318 104l5 20"/>
              </g>
              <ellipse cx="438" cy="1106" rx="73" ry="68" fill="url(#hole)"/>
            </g>
            <g class="axis">
              <path d="M120 1175v78M112 1198l8 10 8-10M124 1180v24M116 1220h8M125 1252h84v28" stroke="#00f" stroke-width="4" fill="none"/>
              <text class="ucs" x="116" y="1281" fill="#00d">USEL</text>
              <path d="M52 1255l-6-40M40 1212l4-20 14 16z" stroke="#060" stroke-width="7" fill="#060"/>
              <path d="M58 1255l5-60" stroke="#1a2cff" stroke-width="9"/><path d="M54 1200l12-28 10 30z" fill="#1a2cff"/>
              <path d="M60 1260h82" stroke="red" stroke-width="9"/><path d="M134 1251l32 11-32 11z" fill="red"/>
              <circle cx="55" cy="1260" r="11" fill="#ffe930" stroke="#665" stroke-width="2"/>
              <text x="56" y="1158" fill="#5060d8">Z</text><text x="38" y="1188" fill="#3fae4a">Y</text><text x="182" y="1275" fill="#d8202c">X</text>
            </g>
          </svg>
        </main>
      </div>

      <footer class="status"><span></span><span></span><span></span><span></span><span class="doc">SLIDE_NC : NC-Standard</span><span class="unit">단위:mm</span><svg class="size" viewBox="0 0 9 9"><path d="M6 0h2v2H6zM6 3h2v2H6zM6 6h2v2H6zM3 3h2v2H3zM3 6h2v2H3zM0 6h2v2H0z" fill="#b8b8b8"/></svg></footer>
    </div>
  </div>
</div>
</body>
</html>
```
FILE: styles.css
```css
* { box-sizing:border-box; }
body, h1, h2, h3, p, hr, form, table, th, td { margin:0; padding:0; }
body { background:#222; font:13px/15px "Noto Sans CJK KR", sans-serif; color:#111; }
button, select, input { font:inherit; color:inherit; margin:0; padding:0; border:0; background:none; border-radius:0; }
button { display:flex; align-items:center; justify-content:center; }
h1, h2, h3, b, th { font-size:inherit; font-weight:normal; }
svg { display:block; flex:none; shape-rendering:crispEdges; }
i { display:block; flex:none; }
.defs { display:none; }

.app { display:flex; flex-direction:column; height:100vh; min-height:748px; border:1px solid #222; background:#f0f0f0; }

/* title */
.titlebar { display:flex; align-items:center; height:30px; flex:none; background:#fff; padding-left:8px; }
.titlebar h1 { flex:1; margin-left:6px; white-space:nowrap; font-size:12px; }
.logo { width:15px; height:17px; shape-rendering:auto; }
.winbtns { display:flex; }
.winbtns button { width:46px; height:30px; }
.winbtns svg { width:10px; height:10px; fill:none; stroke:#000; }

/* menu */
.menubar, .toolbars { background:linear-gradient(90deg, #9ebef5, #c3dafa); }
.menubar { display:flex; align-items:center; gap:16px; height:26px; flex:none; padding:0 0 2px 6px; }
.menubar a { color:#111; text-decoration:none; white-space:nowrap; }
.menubar .grip { margin-right:-6px; }
.mdi { display:flex; gap:6px; margin-left:auto; padding-right:10px; }
.mdi svg { width:10px; height:10px; fill:none; stroke:#000; }
.grip { width:2px; height:14px; background:repeating-linear-gradient(#27418a 0 2px, transparent 2px 4px); }

/* toolbars */
.toolbars { flex:none; display:flex; flex-direction:column; gap:1px; padding-left:3px; }
.row { display:flex; gap:4px; }
.group { display:flex; align-items:center; height:25px; padding-right:2px; border-bottom:1px solid #3c66b4; border-radius:3px; background:linear-gradient(#dceafd, #c0d7f8 55%, #85abe3); }
.group .grip { margin:0 2px 0 3px; height:16px; }
.group button { width:22px; height:22px; flex:none; }
.group svg { width:16px; height:16px; fill:none; stroke:#000; }
.group .soft { stroke:#444; }
.group .dark { fill:#8c8c8c; stroke:#333; shape-rendering:auto; }
.group .lit { fill:#ff0; stroke:#333; shape-rendering:auto; }
.group button:disabled svg { stroke:#7389b8; shape-rendering:auto; }
.group .on { border:1px solid #000080; background:linear-gradient(#ffd9a0, #fdb055); }
.group .drop { width:11px; }
.drop::after { content:""; border:3px solid transparent; border-top-color:#000; border-bottom:0; }
.drop:disabled::after { border-top-color:#8a8f9c; }
.group .sep { width:1px; height:14px; margin:0 2px; background:#6f96d8; }
.group .gap { width:8px; }
.group:has(.more) { padding-right:0; }
.group .more { width:11px; height:24px; margin:0 0 -1px 1px; background:linear-gradient(#86b0f4, #1c3f98); border-radius:0 3px 3px 0; }
.group .more svg { width:11px; height:24px; shape-rendering:auto; }
.group select { width:109px; height:22px; padding-left:2px; border:1px solid #7da2e0; color:#888; opacity:1; appearance:none;
  background:conic-gradient(from -45deg at 50% 100%, #5a7fc4 90deg, transparent 0) no-repeat right 4px center / 6px 3px, #f0f0f0; }

.body { display:flex; flex:1; min-height:0; }

/* guide bar */
.guide { width:69px; flex:none; background:#9ebdf5; }
.guide-in { margin-right:1px; padding:5px 0 5px; border-radius:0 0 4px 4px; background:linear-gradient(90deg, #ddebfe, #b9d2f7 50%, #7fa7e1); box-shadow:1px 0 #4a74bd; }
.dots { height:2px; margin:0 4px 5px; background:repeating-linear-gradient(90deg, #27418a 0 2px, #fff 2px 4px); }
.guide button { flex-direction:column; justify-content:flex-start; width:100%; padding:2px 0 6px; color:#8e8e8e; word-break:break-all; }
.guide svg { width:16px; height:16px; margin-bottom:-2px; fill:none; stroke:#6a80b0; shape-rendering:auto; }
.guide .live { color:#000; }

.work { flex:1; min-width:0; display:flex; flex-direction:column; }
.split { position:relative; flex:1; min-height:0; display:flex; }

/* manager panel */
.panel { width:341px; margin-left:-1px; flex:none; display:flex; flex-direction:column; min-height:0; }
.caption { display:flex; align-items:center; gap:6px; height:19px; flex:none; margin:1px 0 2px; padding:0 2px 0 4px; border:1px solid #a0a0a0; }
.caption h2 { flex:1; }
.caption svg { width:10px; height:10px; fill:none; stroke:#000; }
.bevel { border:3px solid; border-color:#707070 #fff #fff #707070; box-shadow:1px 1px #777; }
.procs { height:150px; flex:none; margin:1px 1px 8px 2px; background:#c8c8c8; }
table { table-layout:fixed; border-collapse:collapse; }
.procs table { width:298px; }
.procs th { height:15px; line-height:14px; font-size:12px; color:#ccc; background:linear-gradient(#888, #aaa); border-right:1px solid #777; border-bottom:1px solid #777; white-space:nowrap; }
.procs td { height:17px; line-height:15px; white-space:nowrap; vertical-align:top; }
.w-state { width:60px; } .w-name { width:80px; } .w-flag { width:12px; } .w-note { width:46px; } .w-c { width:16px; } .w-tool { width:72px; }
.st svg { width:12px; height:12px; margin:2px 0 0 19px; shape-rendering:auto; }
.tp { font-size:12px; }
.tp svg { float:left; width:11px; height:11px; margin:2px 7px 0 -15px; color:#000; }
.procs .note { font-size:12px; padding-left:5px; line-height:12px; }
.sel span { display:block; height:16px; line-height:9px; border:3px solid #000; background:#fc0; text-align:center; font-size:12px; }
.blue { width:12px; height:12px; margin:2px 0 0 3px; border-radius:2px; background:#00f; }

.params { flex:1; min-height:0; display:flex; flex-direction:column; border-top:1px solid #000; padding:3px 2px 0; }
.main { height:96px; flex:none; margin-right:2px; padding:5px 7px 0; border:1px solid #fff; border-right:3px solid #888; color:#8c8c8c; font-size:12px; }
.main p { line-height:14px; }
.pick { display:flex; align-items:center; height:41px; margin-right:-3px; padding-bottom:4px; border-bottom:1px solid #aaa; }
.pick svg { width:23px; height:26px; shape-rendering:auto; }
.list { flex:1; min-height:0; display:flex; border:3px solid; border-color:#707070 #fff #fff #707070; background:#d8d8d8; overflow:hidden; }
.list table { width:315px; height:0; color:#979797; font-size:12px; }
.list th { height:16px; background:linear-gradient(#888, #aaa); }
.w-param { width:225px; }
.list td { height:19px; border:1px solid #b0b0b0; border-left:0; padding:0 0 0 26px; white-space:nowrap; overflow:hidden; line-height:15px; vertical-align:top; }
.list .top td { padding-left:18px; }
.list td svg { float:left; }
.pin { width:14px; height:16px; margin-right:3px; shape-rendering:auto; }
.box { width:11px; height:11px; margin:4px 6px 0 0; color:#999; }
.scroll { width:16px; display:flex; flex-direction:column; background:#f0f0f0; }
.scroll i { flex:1; margin-bottom:12px; background:#cdcdcd; }
.scroll svg { width:16px; height:16px; fill:none; stroke:#555; stroke-width:2; shape-rendering:auto; }
.tabs { display:flex; height:23px; flex:none; margin-top:2px; padding-left:4px; border-top:1px solid #000; background:#fff; }
.tabs button { height:20px; padding:0 7px; color:#888; border-right:1px solid #999; }
.tabs button + button { width:45px; padding:0 14px 0 6px; font-size:12px; }
.tabs .cur { color:#000; background:#f0f0f0; border:solid #000; border-width:0 1px 1px 0; padding:0 6px; }

/* dialog */
.dialog { position:absolute; left:76px; top:94px; z-index:2; width:242px; padding-bottom:4px; border:1px solid #8c8c8c; background:#f0f0f0; box-shadow:1px 2px 7px rgba(0,0,0,.55); font-size:12px; color:#000; }
.dialog header { display:flex; align-items:center; justify-content:space-between; height:24px; padding:0 9px 4px 3px; background:#fff; color:#999; font-size:13px; }
.dialog header svg { width:11px; height:11px; stroke:#888; shape-rendering:auto; }
.line { display:flex; align-items:center; padding-left:9px; }
.shape { height:32px; }
.shape label { width:72px; }
.dialog select, .num, .off input { border:2px solid; border-color:#777 #fff #fff #777; background:#fff; }
.shape select { width:149px; height:20px; padding-left:2px; appearance:none;
  background:conic-gradient(from -45deg at 50% 100%, #000 90deg, transparent 0) no-repeat right 4px center / 8px 4px, linear-gradient(#666, #666) no-repeat right / 1px 100%, linear-gradient(#666, #666) no-repeat right bottom / 16px 1px, linear-gradient(#f0f0f0, #f0f0f0) no-repeat right / 16px 16px, #fff; }
.sect { height:14px; }
.sect hr { border:0; height:1px; margin-left:auto; background:#999; box-shadow:0 1px #fff; }
.h1 { width:143px; margin-right:22px; }
.h2 { width:113px; margin-right:17px; }
.h3 { width:138px; margin-right:13px; }
.opac { height:22px; padding-left:15px; }
.opac span { width:30px; }
.opac label { width:58px; color:#999; }
.slide { height:14px; padding-left:15px; }
.slide input { appearance:none; width:97px; height:14px; background:linear-gradient(#777 50%, #fff 0) no-repeat center / 100% 2px; }
.slide input::-webkit-slider-thumb { appearance:none; width:7px; height:12px; background:#eee; border:1px solid; border-color:#fff #777 #777 #fff; }
.color { height:45px; padding-left:12px; margin:2px 0 3px; }
.color + .sect { padding-bottom:2px; height:16px; }
.swatch, .btn, .dialog footer button { border:1px solid; border-color:#fff #999 #999 #fff; box-shadow:-1px -1px #fff; }
.swatch { width:27px; height:28px; }
.swatch i { width:17px; height:18px; border:1px solid #000; background:#00f; }
.color svg { width:14px; height:18px; margin-left:48px; fill:#c4c4c4; stroke:#777; shape-rendering:auto; }
.z { height:19px; padding-left:12px; }
.z label { width:119px; }
.num { display:flex; width:83px; height:19px; }
.num input { width:63px; padding-left:2px; font-size:11px; }
.num button { width:16px; height:15px; border:solid #900090; border-width:0 1px; background:#ddd; color:#000080; font:bold 7px/8px "Liberation Sans", sans-serif; }
.pickbtn { width:11px; height:18px; margin-left:4px; border:1px solid; border-color:#fff #555 #555 #fff; overflow:hidden; }
.pickbtn svg { width:10px; height:16px; shape-rendering:auto; }
.z + .sect { height:21px; }
.wide { padding:1px 0 3px 131px; }
.btn { width:85px; height:25px; }
.pickc { color:#00f; }
.off { height:24px; padding-left:12px; }
.off label { width:119px; }
.off input { width:80px; height:20px; padding-left:2px; }
.cnt { height:18px; padding-left:12px; }
.cnt span { width:122px; }
.dialog footer { display:flex; gap:3px; padding:7px 9px 1px 0; justify-content:flex-end; border-top:1px solid #999; }
.dialog footer button { width:27px; height:28px; }
.dialog footer .gap { margin-left:4px; }
.dialog footer svg { width:18px; height:18px; shape-rendering:auto; }

/* model view */
.view { flex:1; min-width:0; margin-left:5px; border:solid #777; border-width:1px 0 0 2px; background:#e4e4e4; }
.view svg { width:100%; height:100%; shape-rendering:auto; }
.axis text { font:36px "Liberation Sans", sans-serif; }
.axis .ucs { font-size:20px; font-weight:bold; }

/* status bar */
.status { display:flex; height:20px; flex:none; border-top:1px solid #d0d0d0; background:#f0f0f0; }
.status span { flex:1; margin-top:2px; padding-left:5px; line-height:16px; white-space:nowrap; }
.status span + span { flex:none; width:104px; border-left:1px solid #ccc; }
.status .doc { width:204px; font-size:12px; }
.status .unit { width:78px; font-size:12px; }
.status .size { width:9px; height:9px; margin:9px 2px 0 0; }
```
